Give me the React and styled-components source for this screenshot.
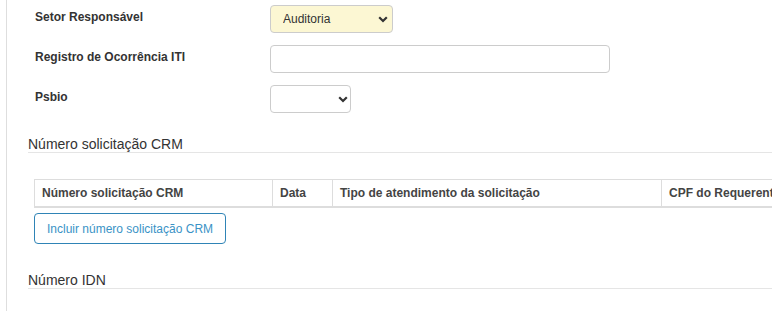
import React from "react";
import styled, { createGlobalStyle } from "styled-components";

const GlobalStyle = createGlobalStyle`
  html, body {
    margin: 0;
    padding: 0;
    background: #fff;
    overflow: hidden;
  }
  body {
    font-family: "Liberation Sans", Arial, sans-serif;
    color: #333;
  }
  * { box-sizing: border-box; }
`;

const Page = styled.div`
  padding-left: 6px;
  height: 311px;
`;

const Panel = styled.div`
  border-left: 1px solid #dedede;
  height: 100%;
  padding: 5px 0 0 21px;
  overflow: hidden;
`;

const Form = styled.div`
  display: flex;
  flex-direction: column;
  gap: 12px;
  padding-left: 7px;
`;

const Row = styled.div`
  display: flex;
  align-items: flex-start;
`;

const Label = styled.label`
  width: 235px;
  flex: none;
  padding-top: 4px;
  font-size: 12px;
  line-height: 16px;
  font-weight: bold;
  color: #333;
`;

const SelectWrap = styled.div`
  position: relative;
  display: inline-block;
  width: ${(p) => p.$width}px;
  height: 28px;
`;

const Select = styled.select`
  appearance: none;
  -webkit-appearance: none;
  width: 100%;
  height: 28px;
  margin: 0;
  padding: 0 20px 0 12px;
  border: 1px solid #ccc;
  border-radius: 4px;
  background: ${(p) => (p.$highlight ? "#fcf7d3" : "#fff")};
  font-family: "Liberation Sans", Arial, sans-serif;
  font-size: 12px;
  color: #333;
  outline: none;
`;

const Chevron = styled.svg`
  position: absolute;
  right: ${(p) => p.$right}px;
  top: 11px;
  width: 10px;
  height: 7px;
  pointer-events: none;
`;

const TextInput = styled.input`
  width: 340px;
  height: 28px;
  margin: 0;
  padding: 0 12px;
  border: 1px solid #ccc;
  border-radius: 4px;
  background: #fff;
  font-family: "Liberation Sans", Arial, sans-serif;
  font-size: 12px;
  outline: none;
`;

const Heading = styled.div`
  margin-top: ${(p) => p.$top}px;
  font-size: 14px;
  line-height: 16px;
  color: #333;
  border-bottom: 1px solid #e5e5e5;
  white-space: nowrap;
`;

const SectionBody = styled.div`
  padding-left: 6px;
`;

const Table = styled.table`
  margin-top: 26px;
  border-collapse: separate;
  border-spacing: 0;
  table-layout: fixed;
  width: 827px;
`;

const Th = styled.th`
  width: ${(p) => p.$w}px;
  text-align: left;
  padding: 5px 7px;
  font-size: 12px;
  line-height: 16px;
  font-weight: bold;
  color: #444;
  border-top: 1px solid #ddd;
  border-bottom: 2px solid #ddd;
  border-left: 1px solid #ddd;
  white-space: nowrap;
  overflow: hidden;
`;

const OutlineButton = styled.button`
  display: block;
  margin-top: 5px;
  height: 31px;
  padding: 0 12px;
  border: 1px solid #2f84b6;
  border-radius: 4px;
  background: #fff;
  font-family: "Liberation Sans", Arial, sans-serif;
  font-size: 12px;
  line-height: 16px;
  color: #3a93c6;
  cursor: pointer;
`;

function ChevronIcon({ right }) {
  return (
    <Chevron $right={right} viewBox="0 0 10 7">
      <polyline
        points="1.2,1.2 5,5 8.8,1.2"
        fill="none"
        stroke="#333"
        strokeWidth="2.2"
      />
    </Chevron>
  );
}

export default function App() {
  return (
    <>
      <GlobalStyle />
      <Page>
        <Panel>
          <Form>
            <Row>
              <Label>Setor Responsável</Label>
              <SelectWrap $width={123}>
                <Select $highlight defaultValue="auditoria">
                  <option value="auditoria">Auditoria</option>
                </Select>
                <ChevronIcon right={5} />
              </SelectWrap>
            </Row>
            <Row>
              <Label>Registro de Ocorrência ITI</Label>
              <TextInput type="text" />
            </Row>
            <Row>
              <Label>Psbio</Label>
              <SelectWrap $width={81}>
                <Select defaultValue="">
                  <option value=""></option>
                </Select>
                <ChevronIcon right={3} />
              </SelectWrap>
            </Row>
          </Form>

          <Heading $top={23}>Número solicitação CRM</Heading>
          <SectionBody>
            <Table>
              <thead>
                <tr>
                  <Th $w={238}>Número solicitação CRM</Th>
                  <Th $w={60}>Data</Th>
                  <Th $w={329}>Tipo de atendimento da solicitação</Th>
                  <Th $w={200}>CPF do Requerente</Th>
                </tr>
              </thead>
            </Table>
            <OutlineButton type="button">Incluir número solicitação CRM</OutlineButton>
          </SectionBody>

          <Heading $top={28}>Número IDN</Heading>
        </Panel>
      </Page>
    </>
  );
}
